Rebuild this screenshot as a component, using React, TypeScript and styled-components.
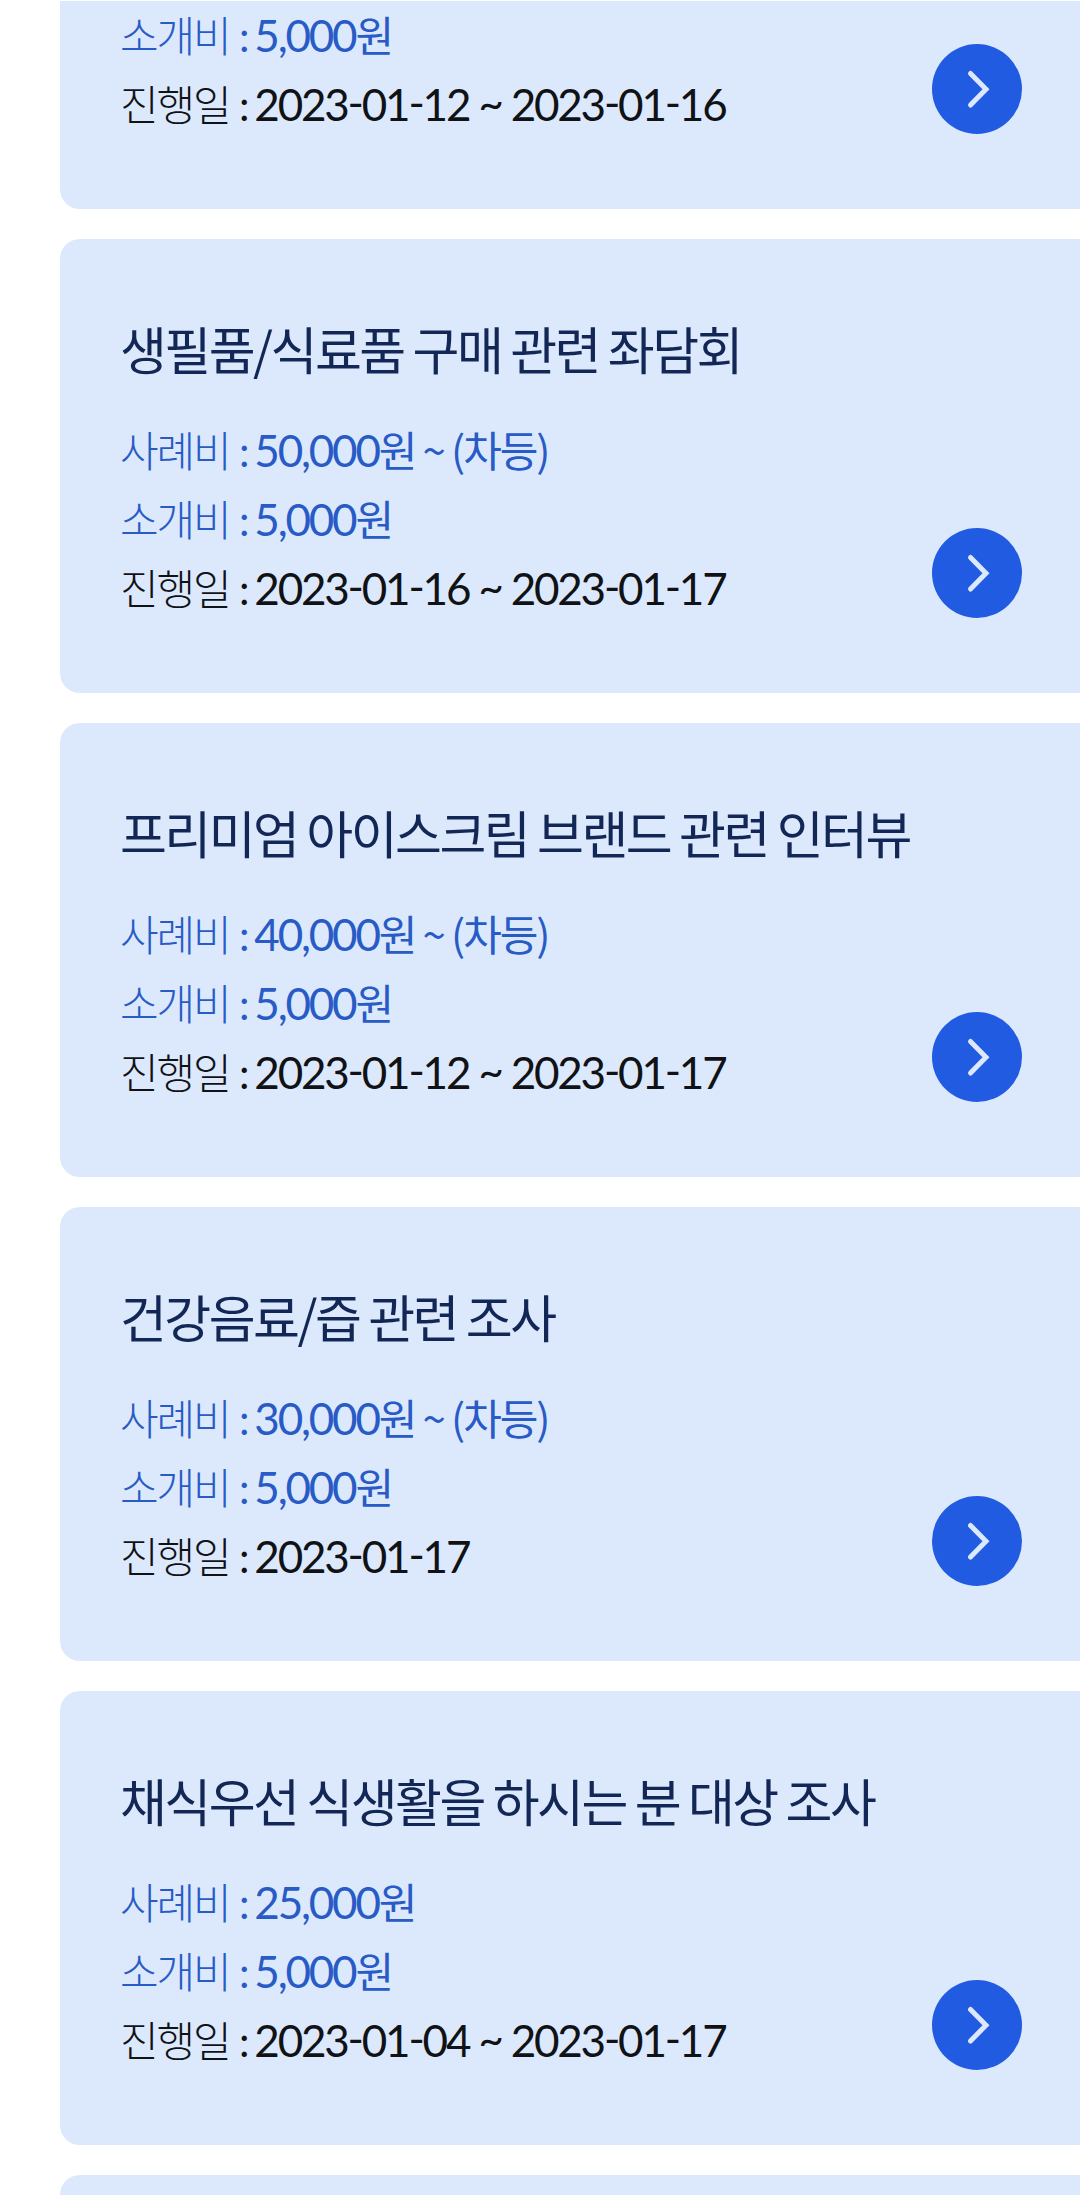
import React from "react";
import styled, { createGlobalStyle } from "styled-components";

const GlobalStyle = createGlobalStyle`
  * { box-sizing: border-box; }
  body {
    margin: 0;
    background: #fff;
    font-family: Lato, "Noto Sans CJK KR", sans-serif;
  }
`;

const Page = styled.main`
  display: flex;
  flex-direction: column;
  gap: 30px;
  min-height: 100vh;
  padding: 1px 0 0 60px;
`;

type Edge = "top" | "bottom" | "none";

const Card = styled.article<{ $cut: Edge }>`
  display: flex;
  align-items: flex-end;
  justify-content: space-between;
  flex: ${(p) => (p.$cut === "bottom" ? "1" : "none")};
  padding: ${(p) => (p.$cut === "top" ? "1px 58px 69px 60px" : p.$cut === "bottom" ? "0" : "69px 58px 69px 60px")};
  border-radius: ${(p) => (p.$cut === "top" ? "0 0 0 20px" : p.$cut === "bottom" ? "20px 0 0 0" : "20px 0 0 20px")};
  background: #dce9fd;
`;

const Title = styled.h2`
  margin: 0 0 29px;
  color: #122755;
  font-family: "Noto Sans CJK KR", sans-serif;
  font-size: 51px;
  font-weight: 400;
  letter-spacing: -0.05em;
  line-height: 80px;
`;

const Details = styled.dl`
  margin: 0;
`;

const Row = styled.div<{ $tone: "blue" | "black" }>`
  display: flex;
  align-items: baseline;
  gap: 7px;
  height: 69px;
  color: ${(p) => (p.$tone === "blue" ? "#285bc6" : "#101216")};
  line-height: 66px;
`;

const Label = styled.dt`
  font-size: 42px;
  font-weight: 300;
  letter-spacing: -0.05em;
`;

const Colon = styled.span`
  font-weight: 400;
`;

const Value = styled.dd`
  margin: 0;
  font-size: 44px;
  font-weight: 400;
  font-feature-settings: "case";
  letter-spacing: -0.05em;
`;

const Unit = styled.span`
  font-family: "Noto Sans CJK KR", sans-serif;
  font-size: 42px;
  font-feature-settings: normal;
  letter-spacing: -0.05em;
  line-height: 1;
`;

const More = styled.button`
  display: block;
  flex: none;
  width: 90px;
  height: 90px;
  margin: 0 0 6px;
  padding: 0;
  border: 0;
  border-radius: 50%;
  background: #215be1;
  cursor: pointer;
`;

const Chevron = () => (
  <svg width="90" height="90" viewBox="0 0 90 90" fill="none" aria-hidden="true">
    <path d="M38.5 29.5 54 45.3 38.5 61" stroke="#dce9fd" strokeWidth="5" strokeLinecap="round" />
  </svg>
);

interface Survey {
  title?: string;
  reward?: string;
  graded?: boolean;
  referral: string;
  from: string;
  to?: string;
}

const surveys: Survey[] = [
  { referral: "5,000", from: "2023-01-12", to: "2023-01-16" },
  { title: "생필품/식료품 구매 관련 좌담회", reward: "50,000", graded: true, referral: "5,000", from: "2023-01-16", to: "2023-01-17" },
  { title: "프리미엄 아이스크림 브랜드 관련 인터뷰", reward: "40,000", graded: true, referral: "5,000", from: "2023-01-12", to: "2023-01-17" },
  { title: "건강음료/즙 관련 조사", reward: "30,000", graded: true, referral: "5,000", from: "2023-01-17" },
  { title: "채식우선 식생활을 하시는 분 대상 조사", reward: "25,000", referral: "5,000", from: "2023-01-04", to: "2023-01-17" },
];

interface DetailProps {
  label: string;
  tone: "blue" | "black";
  children: React.ReactNode;
}

const Detail = ({ label, tone, children }: DetailProps) => (
  <Row $tone={tone}>
    <Label>
      {label} <Colon>:</Colon>
    </Label>
    <Value>{children}</Value>
  </Row>
);

const SurveyCard = ({ title, reward, graded, referral, from, to }: Survey) => (
  <Card $cut={title ? "none" : "top"}>
    <div>
      {title && <Title>{title}</Title>}
      <Details>
        {reward && (
          <Detail label="사례비" tone="blue">
            {reward}
            <Unit>{graded ? "원 ~ (차등)" : "원"}</Unit>
          </Detail>
        )}
        <Detail label="소개비" tone="blue">
          {referral}
          <Unit>원</Unit>
        </Detail>
        <Detail label="진행일" tone="black">
          {from}
          {to && " ~ "}
          {to}
        </Detail>
      </Details>
    </div>
    <More type="button" aria-label="자세히 보기">
      <Chevron />
    </More>
  </Card>
);

export default function App() {
  return (
    <>
      <GlobalStyle />
      <Page>
        {surveys.map((survey, i) => (
          <SurveyCard key={i} {...survey} />
        ))}
        <Card $cut="bottom" />
      </Page>
    </>
  );
}
